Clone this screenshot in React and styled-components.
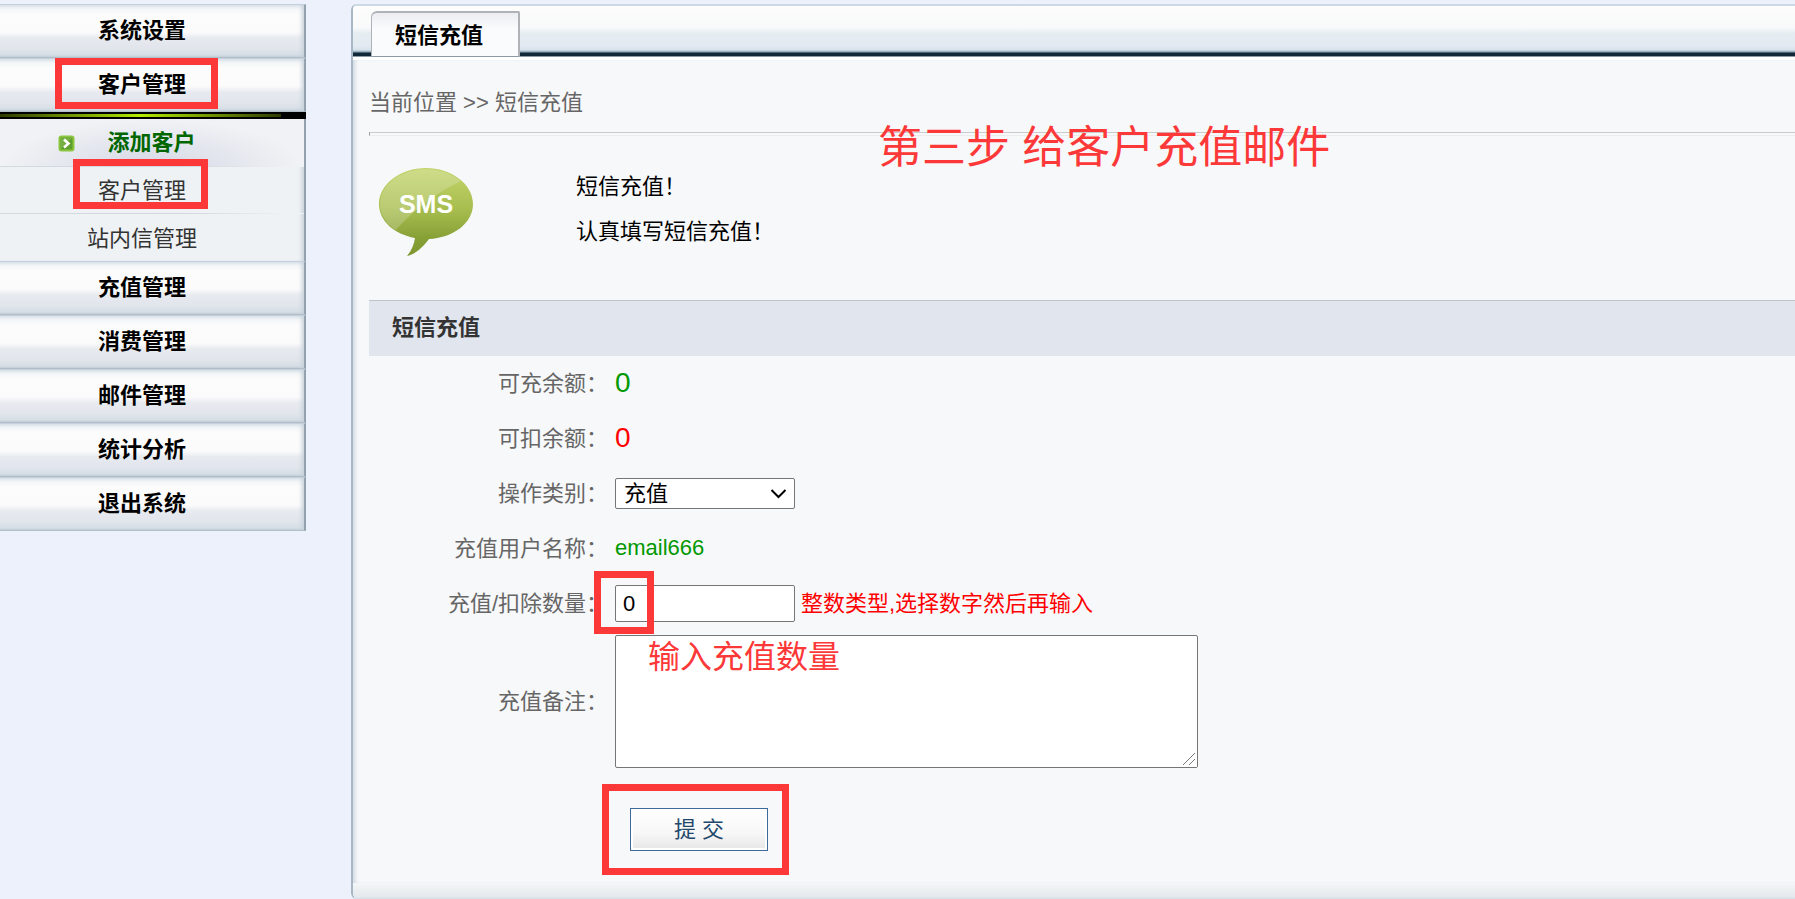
import React, { useState } from "react";
import styled, { createGlobalStyle, css } from "styled-components";

const GlobalStyle = createGlobalStyle`
  * {
    box-sizing: border-box;
  }
  body {
    margin: 0;
    background: #edf1fb;
    color: #000;
    font-family: "Liberation Sans", Arial, "Noto Sans CJK SC", sans-serif;
    font-size: 22px;
    line-height: 30px;
  }
  input, select, textarea, button {
    font: inherit;
  }
`;

// page
const Page = styled.div`
  display: grid;
  grid-template-columns: 306px minmax(0, 1fr);
  column-gap: 45px;
  align-items: start;
  padding-top: 4px;
`;

// red marker drawn round a control
const Marked = styled.span`
  position: relative;
  display: inline-flex;
  &::after {
    content: "";
    position: absolute;
    inset: ${(props) => props.$inset};
    border: 7px solid #fc3838;
    pointer-events: none;
    z-index: 5;
  }
`;

const Note = styled.div`
  position: absolute;
  top: ${(props) => props.$top}px;
  left: ${(props) => props.$left}px;
  color: #fc3838;
  font-size: ${(props) => props.$size}px;
  line-height: ${(props) => props.$size}px;
  white-space: nowrap;
  pointer-events: none;
  z-index: 5;
`;

// sidebar
const Sidebar = styled.nav`
  display: flex;
  flex-direction: column;
`;

const MenuItem = styled.a`
  display: flex;
  align-items: center;
  justify-content: center;
  height: 54px;
  padding-right: 20px;
  border-top: 1px solid #c5d0dc;
  border-bottom: 1px solid #b0beca;
  border-right: 2px solid #93a2ae;
  background: linear-gradient(
    #dbe4ec 0,
    #f4f6f8 4px,
    #fcfcfc 9px,
    #fbfbfc 27px,
    #e7eaef 33px,
    #e1e5ec 44px,
    #d6dee5 50px,
    #c3ced8 52px
  );
  box-shadow: inset -4px 0 4px -2px #c6d0d9;
  color: #000;
  font-weight: bold;
  text-decoration: none;
`;

const ActiveBar = styled.div`
  height: 7px;
  padding: 2px 0;
  background: #000;
  &::before {
    content: "";
    display: block;
    width: 281px;
    height: 3px;
    background: linear-gradient(90deg, #2c3a00, #b4ec00 50%, #2c3a00);
  }
`;

const SubMenu = styled.div`
  display: flex;
  flex-direction: column;
  height: 142px;
  border-right: 2px solid #93a2ae;
  background: #eff2f5;
  box-shadow: inset -4px 0 4px -2px #c6d0d9;
`;

const SubItem = styled.a`
  display: flex;
  flex: 1;
  align-items: center;
  justify-content: center;
  padding: 2px 20px 0 0;
  color: #333;
  text-decoration: none;
  & + & {
    border-top: 1px solid;
    border-image: linear-gradient(90deg, #d3dae0, #d0d7de 60%, #eff2f5 95%) 1;
  }
  ${(props) =>
    props.$active &&
    css`
      gap: 32px;
      padding-right: 50px;
      color: #006600;
      font-weight: bold;
      background: radial-gradient(
        ellipse 150px 46px at 50% 100%,
        #d5d9e5,
        #f0f2f5
      );
    `}
`;

// main panel
const Panel = styled.main`
  position: relative;
  border-radius: 6px 0 0 6px;
  border-left: 2px solid #a8b7c4;
  background: #f7f8fa;
  overflow: hidden;
`;

const TabBar = styled.div`
  display: flex;
  align-items: flex-end;
  height: 53px;
  padding-left: 18px;
  border-top: 2px solid #ccd9e4;
  background: linear-gradient(
    #fdfdfd 0,
    #f8f9fa 22px,
    #e6edf1 27px,
    #e2eaf2 40px,
    #d8e2ea 44px,
    #8ba3b5 46px,
    #102838 47px,
    #102838 50px,
    #8e9aa3 50px
  );
`;

const Tab = styled.a`
  display: flex;
  align-items: center;
  width: 149px;
  height: 46px;
  padding: 4px 0 2px 23px;
  border: 1px solid #afb3b8;
  border-width: 2px 2px 1px 1px;
  border-bottom-color: #8e9aa3;
  border-radius: 6px 2px 0 0;
  background: linear-gradient(#ebedf2, #fafbfc 16px);
  color: #000;
  font-weight: bold;
  text-decoration: none;
`;

const Content = styled.div`
  padding-left: 16px;
  border-top: 3px solid #fff;
  box-shadow: inset 4px 0 4px -2px #ccd7e0;
`;

const Breadcrumb = styled.div`
  padding: 28px 0 14px;
  color: #666;
`;

const Rule = styled.hr`
  height: 4px;
  margin: 0;
  border: 1px solid #ececec;
  border-top-color: #c9cbcd;
  border-left-color: #999;
  border-right: 0;
`;

const Intro = styled.div`
  display: flex;
  padding: 28px 0 43px 10px;
`;

const SmsIcon = styled.svg`
  display: block;
  width: 94px;
  height: 89px;
  margin: 4px 103px 0 0;
`;

const IntroText = styled.p`
  margin: 0;
  line-height: 45px;
`;

const SectionTitle = styled.h2`
  margin: 0;
  padding: 12px 23px 13px;
  border-top: 1px solid #bbc4cb;
  background: #e0e5ee;
  color: #333;
  font-size: 22px;
  line-height: 30px;
`;

// form
const Form = styled.form`
  padding-bottom: 16px;
`;

const Row = styled.div`
  display: grid;
  grid-template-columns: 239px minmax(0, 1fr);
  column-gap: 7px;
  align-items: center;
  min-height: ${(props) => (props.$tall ? 141 : 55)}px;
`;

const Label = styled.label`
  color: #666;
  text-align: right;
  white-space: nowrap;
`;

const Field = styled.div`
  display: flex;
  align-items: center;
  gap: 6px;
`;

const Value = styled.output`
  padding-bottom: 2px;
  color: ${(props) => props.$color};
  font-size: ${(props) => (props.$large ? 28 : 22)}px;
`;

const SelectWrap = styled.div`
  position: relative;
  display: flex;
  svg {
    position: absolute;
    right: 8px;
    top: 10px;
    pointer-events: none;
  }
`;

const Select = styled.select`
  width: 180px;
  height: 31px;
  padding: 0 8px;
  border: 1px solid #767676;
  border-radius: 2px;
  background: #fff;
  color: #000;
  line-height: 28px;
  appearance: none;
`;

const NumberInput = styled.input`
  width: 180px;
  height: 37px;
  padding: 1px 7px;
  border: 1px solid #767676;
  border-radius: 2px;
  background: #fff;
  color: #000;
`;

const Hint = styled.span`
  color: #f00;
`;

const TextArea = styled.textarea`
  display: block;
  width: 583px;
  height: 133px;
  padding: 4px;
  border: 1px solid #767676;
  border-radius: 2px;
  background: #fff;
`;

const NoteAnchor = styled.div`
  position: relative;
  width: fit-content;
`;

// larger drag corner, laid over the native one
const Grip = styled.svg`
  position: absolute;
  right: 1px;
  bottom: 1px;
  background: #fff;
  pointer-events: none;
`;

const Actions = styled.div`
  padding: 36px 0 16px 261px;
`;

const Submit = styled.button`
  width: 138px;
  height: 43px;
  padding: 0;
  border: 1px solid #40699b;
  background: linear-gradient(#fff, #f7f7f7 60%, #e6e6e6);
  box-shadow: inset 0 0 0 2px #fff;
  color: #23476b;
`;

const PanelFoot = styled.div`
  height: 16px;
  background: linear-gradient(#f4f6f7, #e4e9ee 14px, #d4dde5);
`;

const ArrowBadge = () => (
  <svg width="17" height="17" viewBox="0 0 17 17" aria-hidden="true">
    <rect x="0.5" y="0.5" width="16" height="16" rx="3" fill="#8cc63f" />
    <rect x="2.5" y="2.5" width="12" height="12" rx="1" fill="#5f9f2d" />
    <path d="M2.5 14.5V3.5a1 1 0 0 1 1-1h11z" fill="#76b043" />
    <path
      d="M6 4.5l4.5 4L6 12.5"
      fill="none"
      stroke="#fff"
      strokeWidth="2.6"
    />
  </svg>
);

const Sms = () => (
  <SmsIcon viewBox="0 0 94 89" role="img" aria-label="SMS">
    <defs>
      <linearGradient id="bubble" x1="0" y1="0" x2="0" y2="1">
        <stop offset="0" stopColor="#c3d46c" />
        <stop offset="0.45" stopColor="#a9bf50" />
        <stop offset="0.8" stopColor="#87a036" />
        <stop offset="1" stopColor="#7d9630" />
      </linearGradient>
      <clipPath id="oval">
        <ellipse cx="47" cy="36" rx="46" ry="35" />
      </clipPath>
    </defs>
    <path
      d="M47 0C72 0 94 16 94 36S73 70 50 71C44 79 37 86 28 88C33 82 35 76 36 70C15 66 0 53 0 36C0 16 22 0 47 0Z"
      fill="url(#bubble)"
    />
    <path
      d="M0 0H94L82 13C60 23 34 42 16 63L0 60Z"
      fill="#fff"
      opacity="0.2"
      clipPath="url(#oval)"
    />
    <text
      x="47"
      y="45"
      textAnchor="middle"
      fill="#fff"
      fontFamily="Liberation Sans, Arial, sans-serif"
      fontSize="25"
      fontWeight="bold"
    >
      SMS
    </text>
  </SmsIcon>
);

const bottomMenu = ["充值管理", "消费管理", "邮件管理", "统计分析", "退出系统"];

const App = () => {
  const [amount, setAmount] = useState("0");

  return (
    <>
      <GlobalStyle />
      <Page>
        <Sidebar>
          <MenuItem href="#">系统设置</MenuItem>
          <MenuItem href="#">
            <Marked $inset="-12px -32px -9px -43px">客户管理</Marked>
          </MenuItem>
          <ActiveBar />
          <SubMenu>
            <SubItem href="#" $active>
              <ArrowBadge />
              添加客户
            </SubItem>
            <SubItem href="#">
              <Marked $inset="-17px -22px -3px -25px">客户管理</Marked>
            </SubItem>
            <SubItem href="#">站内信管理</SubItem>
          </SubMenu>
          {bottomMenu.map((name) => (
            <MenuItem href="#" key={name}>
              {name}
            </MenuItem>
          ))}
        </Sidebar>

        <Panel>
          <TabBar>
            <Tab href="#">短信充值</Tab>
          </TabBar>
          <Content>
            <Breadcrumb>当前位置 &gt;&gt; 短信充值</Breadcrumb>
            <Rule />
            <Note $top={122} $left={525} $size={44}>
              第三步 给客户充值邮件
            </Note>
            <Intro>
              <Sms />
              <div>
                <IntroText>短信充值！</IntroText>
                <IntroText>认真填写短信充值！</IntroText>
              </div>
            </Intro>
            <SectionTitle>短信充值</SectionTitle>
            <Form onSubmit={(e) => e.preventDefault()}>
              <Row>
                <Label htmlFor="credit">可充余额：</Label>
                <Value id="credit" $color="#090" $large>
                  0
                </Value>
              </Row>
              <Row>
                <Label htmlFor="debit">可扣余额：</Label>
                <Value id="debit" $color="#f00" $large>
                  0
                </Value>
              </Row>
              <Row>
                <Label htmlFor="kind">操作类别：</Label>
                <Field>
                  <SelectWrap>
                    <Select id="kind" defaultValue="add">
                      <option value="add">充值</option>
                      <option value="cut">扣除</option>
                    </Select>
                    <svg width="17" height="12" viewBox="0 0 17 12">
                      <path
                        d="M1.5 2l7 7 7-7"
                        fill="none"
                        stroke="#000"
                        strokeWidth="2"
                      />
                    </svg>
                  </SelectWrap>
                </Field>
              </Row>
              <Row>
                <Label htmlFor="user">充值用户名称：</Label>
                <Value id="user" $color="#090">
                  email666
                </Value>
              </Row>
              <Row>
                <Label htmlFor="amount">充值/扣除数量：</Label>
                <Field>
                  <Marked $inset="-14px 141px -12px -21px">
                    <NumberInput
                      id="amount"
                      type="text"
                      value={amount}
                      onChange={(e) => setAmount(e.target.value)}
                    />
                  </Marked>
                  <Hint>整数类型,选择数字然后再输入</Hint>
                </Field>
              </Row>
              <Row $tall>
                <Label htmlFor="remark">充值备注：</Label>
                <NoteAnchor>
                  <TextArea id="remark" />
                  <Grip width="16" height="16" viewBox="0 0 16 16">
                    <path
                      d="M2 14L14 2M8 14l6-6"
                      fill="none"
                      stroke="#777"
                      strokeWidth="1"
                    />
                  </Grip>
                  <Note $top={6} $left={33} $size={32}>
                    输入充值数量
                  </Note>
                </NoteAnchor>
              </Row>
              <Actions>
                <Marked $inset="-24px -21px -24px -28px">
                  <Submit type="submit">提 交</Submit>
                </Marked>
              </Actions>
            </Form>
          </Content>
          <PanelFoot />
        </Panel>
      </Page>
    </>
  );
};

export default App;
